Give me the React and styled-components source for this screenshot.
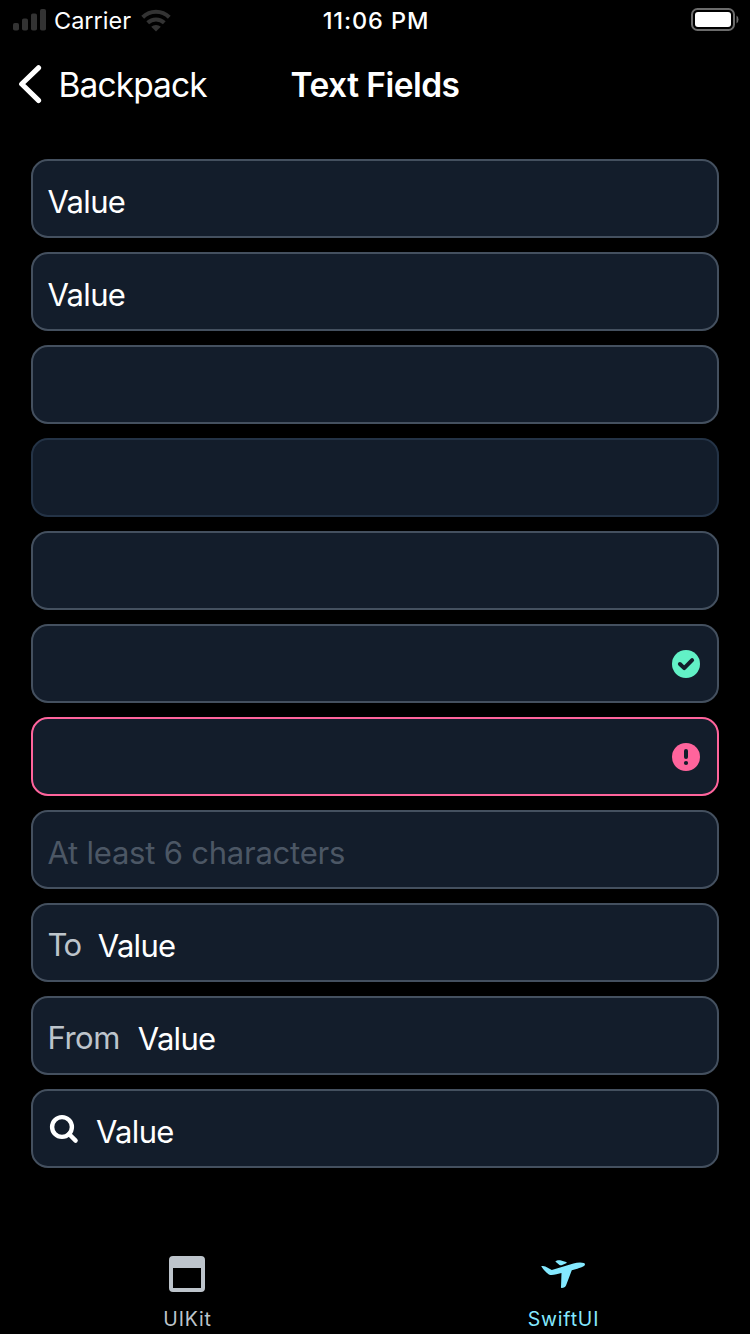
import React from "react";
import styled, { createGlobalStyle } from "styled-components";

const GlobalStyle = createGlobalStyle`
  *, *::before, *::after { box-sizing: border-box; }
  html, body { margin: 0; background: #000; }
  body { font-family: Inter, "Liberation Sans", sans-serif; color: #fff; }
  svg { display: block; flex: none; }
`;

const Screen = styled.div`
  width: 750px;
  height: 1334px;
  display: flex;
  flex-direction: column;
  overflow: hidden;
  background: #000;
`;

const StatusBar = styled.header`
  height: 40px;
  display: grid;
  grid-template-columns: 1fr auto 1fr;
  align-items: center;
  padding: 0 11px 0 13px;
`;

const StatusGroup = styled.div`
  display: flex;
  align-items: center;
  justify-content: ${(p) => (p.$end ? "flex-end" : "flex-start")};
`;

const Carrier = styled.span`
  margin: 2px 10px 0 8px;
  font-size: 23.5px;
  line-height: 30px;
  letter-spacing: 0;
`;

const Clock = styled.time`
  margin-top: 2px;
  font-size: 23.5px;
  font-weight: 550;
  line-height: 30px;
  letter-spacing: 0.9px;
`;

const NavBar = styled.nav`
  height: 88px;
  display: grid;
  grid-template-columns: 1fr auto 1fr;
  align-items: center;
  padding: 0 18px;
`;

const BackButton = styled.a`
  display: flex;
  align-items: center;
  gap: 15.5px;
  font-size: 33.5px;
  line-height: 44px;
  letter-spacing: -0.9px;
`;

const BackLabel = styled.span`
  padding-top: 1px;
`;

const Title = styled.h1`
  margin: 0;
  padding-top: 1px;
  font-size: 33.5px;
  font-weight: 600;
  line-height: 44px;
  letter-spacing: -0.55px;
`;

const Form = styled.main`
  flex: 1;
  display: flex;
  flex-direction: column;
  gap: 14px;
  padding: 31px 31px 0;
`;

const borders = { normal: "#44505f", disabled: "#243346", error: "#ff649c" };

const Field = styled.div`
  height: 79px;
  display: flex;
  align-items: center;
  padding: 0 17px 0 14.5px;
  border: 2px solid ${(p) => borders[p.$state || "normal"]};
  border-radius: 17px;
  background: #131d2b;
`;

const FieldText = styled.span`
  padding-top: 7px;
  font-size: 31px;
  line-height: 40px;
  letter-spacing: ${(p) => p.$spacing ?? -0.7}px;
  color: ${(p) => (p.$placeholder ? "#4c5765" : "#fff")};
`;

const Prefix = styled(FieldText)`
  padding-top: 5px;
  margin-right: ${(p) => p.$gap}px;
  color: #bdc4cb;
`;

const LeadingIcon = styled.span`
  margin: 0 17px 0 1.5px;
`;

const TrailingIcon = styled.span`
  margin-left: auto;
`;

const TabBar = styled.footer`
  height: 98px;
  display: grid;
  grid-template-columns: 374px 1fr;
`;

const Tab = styled.a`
  display: flex;
  flex-direction: column;
  align-items: center;
  padding: 20px 0 0 ${(p) => (p.$active ? 2 : 0)}px;
  color: ${(p) => (p.$active ? "#84e9ff" : "#bdc4cb")};
`;

const TabLabel = styled.span`
  margin-top: 15px;
  padding-left: 1px;
  font-size: 19.5px;
  font-weight: 400;
  line-height: 24px;
  letter-spacing: ${(p) => p.$spacing}px;
`;

const SignalIcon = () => (
  <svg width="33" height="22" viewBox="0 0 33 22" fill="#333">
    <rect x="0" y="14" width="6" height="7.5" rx="1.8" />
    <rect x="9" y="9.5" width="6" height="12" rx="1.8" />
    <rect x="18" y="4.5" width="6" height="17" rx="1.8" />
    <rect x="27" y="0" width="6" height="21.5" rx="1.8" />
  </svg>
);

const WifiIcon = () => (
  <svg width="30" height="23" viewBox="0 0 30 23" fill="none" stroke="#333" strokeWidth="4">
    <path d="M1.7 8.3a19 19 0 0 1 26.6 0" />
    <path d="M6.7 13.8a12 12 0 0 1 16.6 0" />
    <path d="M10.2 17.8a7 7 0 0 1 9.600 0L15 22.600Z" fill="#333" stroke="none" />
  </svg>
);

const BatteryIcon = () => (
  <svg width="48" height="24" viewBox="0 0 48 24">
    <rect x="1" y="1" width="42" height="21" rx="5.5" fill="none" stroke="#6b6b6b" strokeWidth="2" />
    <rect x="4" y="4" width="36" height="15" rx="3" fill="#fff" />
    <path d="M45.5 7.5q2 1.2 2 4t-2 4Z" fill="#6b6b6b" />
  </svg>
);

const BackIcon = () => (
  <svg width="25" height="40" viewBox="0 0 25 40" fill="none" stroke="#fff" strokeWidth="5.2" strokeLinecap="round" strokeLinejoin="round">
    <path d="M20.500 3.800 3.700 20l16.800 16.400" />
  </svg>
);

const SuccessIcon = () => (
  <svg width="28" height="28" viewBox="0 0 28 28">
    <circle cx="14" cy="14" r="14" fill="#62f1c6" />
    <path d="m7.900 14 4.300 4.100 7.900-8" fill="none" stroke="#131d2b" strokeWidth="4" strokeLinecap="round" strokeLinejoin="round" />
  </svg>
);

const ErrorIcon = () => (
  <svg width="28" height="28" viewBox="0 0 28 28">
    <circle cx="14" cy="14" r="14" fill="#ff649c" />
    <path d="M14 8v6" stroke="#131d2b" strokeWidth="4" strokeLinecap="round" />
    <circle cx="14" cy="20" r="2.1" fill="#131d2b" />
  </svg>
);

const SearchIcon = () => (
  <svg width="30" height="30" viewBox="0 0 30 30" fill="none" stroke="#fff" strokeWidth="4.4">
    <circle cx="13" cy="13" r="9.900" />
    <path d="m20 20 6.600 6.600" strokeLinecap="round" />
  </svg>
);

const WindowIcon = () => (
  <svg width="36" height="36" viewBox="0 0 36 36" fill="currentColor" fillRule="evenodd">
    <path d="M4 0h28a4 4 0 0 1 4 4v28a4 4 0 0 1-4 4H4a4 4 0 0 1-4-4V4a4 4 0 0 1 4-4ZM4 12v20h28V12Z" />
  </svg>
);

const PlaneIcon = () => (
  <svg width="44" height="36" viewBox="0 0 44 36" fill="currentColor">
    <path d="M0.2 10.3c1.2-.6 2.8-.4 4.2.2l6.400 3.600L32.400 7.600c3.500-1 7.500-1.500 10.400-.5 1.600.6 1.500 2.200.2 3-1.700 1.100-4.200 1.900-6.700 2.600L30.800 14.200l-5.800 15.200c-.6 1.600-2.200 2.500-4.200 2.500-.6 0-.8-.4-.8-1l.5-14-5.100 1.300c-2.900.7-5.600 1.200-7.500.2C5.200 17 2.200 13.200.2 10.300Z" />
    <path d="M14.300 5.600c1.200-1.200 3.100-1.700 4.900-1.300l5.900 1.700c.8.3.8 1 .1 1.300l-4.600 1.900c-.7.3-1.500.2-2.100-.2Z" />
  </svg>
);

export default function App() {
  return (
    <>
      <GlobalStyle />
      <Screen>
        <StatusBar>
          <StatusGroup>
            <SignalIcon />
            <Carrier>Carrier</Carrier>
            <WifiIcon />
          </StatusGroup>
          <Clock>11:06 PM</Clock>
          <StatusGroup $end>
            <BatteryIcon />
          </StatusGroup>
        </StatusBar>
        <NavBar>
          <BackButton>
            <BackIcon />
            <BackLabel>Backpack</BackLabel>
          </BackButton>
          <Title>Text Fields</Title>
        </NavBar>
        <Form>
          <Field><FieldText>Value</FieldText></Field>
          <Field><FieldText>Value</FieldText></Field>
          <Field />
          <Field $state="disabled" />
          <Field />
          <Field><TrailingIcon><SuccessIcon /></TrailingIcon></Field>
          <Field $state="error"><TrailingIcon><ErrorIcon /></TrailingIcon></Field>
          <Field><FieldText $placeholder $spacing={-0.22}>At least 6 characters</FieldText></Field>
          <Field><Prefix $gap={17.5} $spacing={-1.7}>To</Prefix><FieldText>Value</FieldText></Field>
          <Field><Prefix $gap={18} $spacing={-0.5}>From</Prefix><FieldText>Value</FieldText></Field>
          <Field><LeadingIcon><SearchIcon /></LeadingIcon><FieldText>Value</FieldText></Field>
        </Form>
        <TabBar>
          <Tab><WindowIcon /><TabLabel $spacing={0.8}>UIKit</TabLabel></Tab>
          <Tab $active><PlaneIcon /><TabLabel $spacing={0.8}>SwiftUI</TabLabel></Tab>
        </TabBar>
      </Screen>
    </>
  );
}
